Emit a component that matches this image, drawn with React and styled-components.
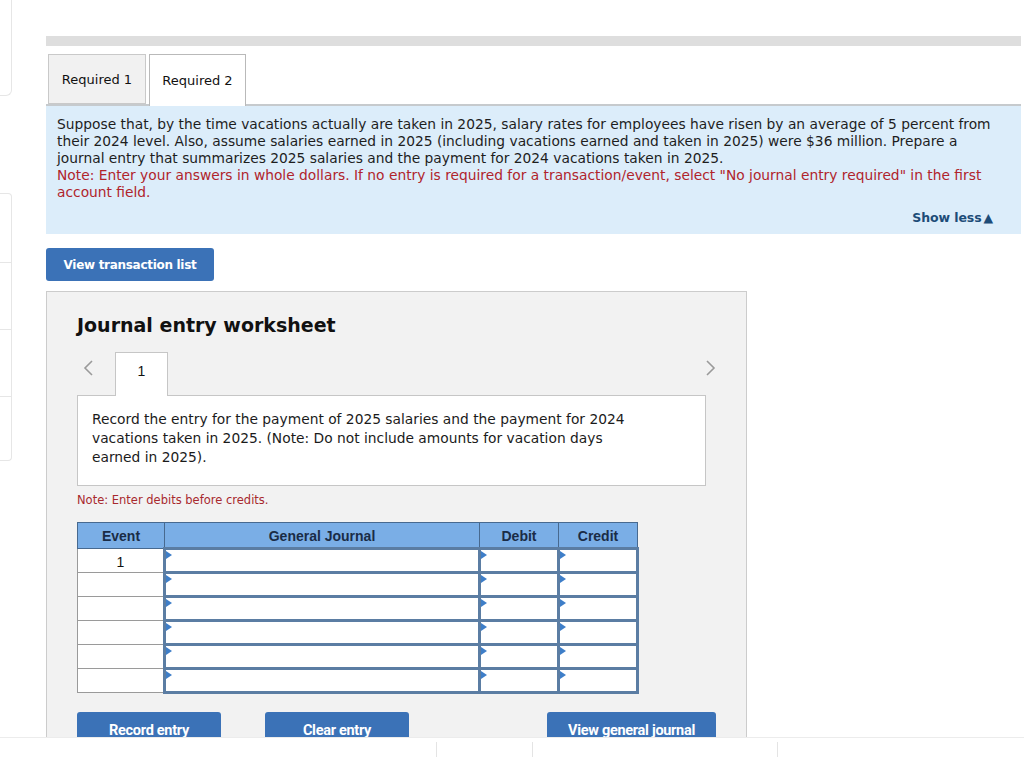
import React from "react";
import styled, { createGlobalStyle } from "styled-components";

const Global = createGlobalStyle`
  html, body { margin: 0; padding: 0; background: #fff; }
  body { font-family: "DejaVu Sans", Verdana, sans-serif; color: #222; }
  * { box-sizing: border-box; }
`;

const Page = styled.div`
  position: relative;
  width: 1024px;
  height: 757px;
  overflow: hidden;
  display: flex;
`;

const Side = styled.div`
  width: 12px;
  flex: none;
  display: flex;
  flex-direction: column;
`;

const SideTop = styled.div`
  height: 96px;
  border: 1px solid #e6e6e6;
  border-top: none;
  border-left: none;
  border-bottom-right-radius: 6px;
`;

const SideItem = styled.div`
  height: ${(p) => p.h}px;
  margin-top: ${(p) => p.mt || 0}px;
  border: 1px solid #e6e6e6;
  border-left: none;
  border-top: ${(p) => (p.first ? "1px solid #e6e6e6" : "none")};
  border-top-right-radius: ${(p) => (p.first ? "4px" : "0")};
  border-bottom-right-radius: ${(p) => (p.last ? "4px" : "0")};
`;

const Main = styled.div`
  margin-left: 34px;
  width: 975px;
  padding-top: 36px;
`;

const TopBar = styled.div`
  height: 10px;
  background: #dedede;
`;

const Tabs = styled.div`
  display: flex;
  gap: 3px;
  margin-top: 8px;
  padding-left: 2px;
  position: relative;
  z-index: 1;
`;

const Tab = styled.div`
  width: ${(p) => p.w}px;
  height: ${(p) => (p.active ? 52 : 50)}px;
  margin-bottom: ${(p) => (p.active ? -2 : 0)}px;
  display: flex;
  align-items: center;
  justify-content: center;
  font-size: 13px;
  color: #111;
  background: ${(p) => (p.active ? "#fff" : "#f1f1f1")};
  border: 1px solid ${(p) => (p.active ? "#b9b9b9" : "#c9c9c9")};
  border-bottom: ${(p) => (p.active ? "none" : "1px solid #c9c9c9")};
  padding-top: 1px;
  padding-bottom: ${(p) => (p.active ? 2 : 0)}px;
`;

const Prompt = styled.div`
  background: #dcedfa;
  border-top: 2px solid #c6cacd;
  padding: 10px 28px 8px 11px;
  font-size: 13.8px;
  line-height: 17px;
  color: #1e1e1e;
  height: 130px;
  display: flex;
  flex-direction: column;
`;

const Red = styled.span`
  color: #b0242c;
`;

const ShowLess = styled.div`
  margin-top: auto;
  align-self: flex-end;
  font-weight: bold;
  font-size: 12.5px;
  color: #1d4c78;
  letter-spacing: -0.1px;
`;

const Tri = styled.span`
  margin-left: 2px;
`;

const BlueButton = styled.button`
  display: flex;
  justify-content: center;
  width: ${(p) => p.w}px;
  height: ${(p) => p.h || 33}px;
  border: none;
  border-radius: 3px;
  background: #3b72b7;
  color: #fff;
  font-family: ${(p) => (p.condensed ? '"Roboto", "Liberation Sans", sans-serif' : '"DejaVu Sans", Verdana, sans-serif')};
  font-weight: bold;
  font-size: ${(p) => p.fs || 12}px;
  letter-spacing: -0.3px;
  padding: ${(p) => (p.condensed ? "10px 0 0" : "0")};
  align-items: ${(p) => (p.condensed ? "flex-start" : "center")};
  cursor: pointer;
`;

const TopButtonWrap = styled.div`
  margin-top: 14px;
`;

const Worksheet = styled.div`
  margin-top: 10px;
  width: 701px;
  background: #f2f2f2;
  border: 1px solid #cccccc;
  padding: 21px 0 40px 30px;
`;

const Title = styled.h2`
  margin: 0;
  font-size: 19px;
  font-weight: bold;
  color: #111;
  line-height: 24px;
`;

const NavRow = styled.div`
  display: flex;
  align-items: center;
  margin-top: 15px;
  height: 44px;
  width: 640px;
  position: relative;
  z-index: 1;
`;

const Arrow = styled.div`
  width: 38px;
  display: flex;
  justify-content: ${(p) => (p.right ? "flex-end" : "flex-start")};
  padding-left: ${(p) => (p.right ? 0 : 5)}px;
  margin-left: ${(p) => (p.right ? "auto" : 0)};
  color: #9a9a9a;
  align-self: center;
  margin-top: -12px;
`;

const NumTab = styled.div`
  width: 53px;
  height: 44px;
  background: #fff;
  border: 1px solid #c6c6c6;
  border-bottom: none;
  display: flex;
  align-items: center;
  justify-content: center;
  font-family: "Liberation Sans", Arial, sans-serif;
  font-size: 14px;
  color: #111;
  padding-bottom: 7px;
`;

const RecordBox = styled.div`
  width: 629px;
  height: 91px;
  margin-top: -1px;
  background: #fff;
  border: 1px solid #c6c6c6;
  padding: 14px 14px;
  font-size: 13.8px;
  line-height: 19px;
  color: #1b1b1b;
`;

const NoteSmall = styled.div`
  margin-top: 7px;
  font-size: 11.5px;
  color: #a8292e;
`;

const Table = styled.table`
  margin-top: 15px;
  border-collapse: collapse;
  font-family: "Liberation Sans", Arial, sans-serif;
  table-layout: fixed;
  width: 561px;
`;

const Th = styled.th`
  height: 26px;
  background: #7aaee6;
  border: 1px solid #47698f;
  color: #1a2c46;
  font-size: 14px;
  font-weight: bold;
  padding: 1px 0 0;
  width: ${(p) => p.w}px;
`;

const EventCell = styled.td`
  height: 24px;
  background: #fff;
  border: 1px solid #9a9a9a;
  text-align: center;
  vertical-align: top;
  padding-top: 5px;
  font-size: 14px;
  color: #111;
`;

const InputCell = styled.td`
  height: 24px;
  background: #fff;
  border: 3px solid #5b7da3;
  position: relative;
  padding: 0;
`;

const Marker = styled.span`
  position: absolute;
  left: 0;
  top: 1px;
  width: 0;
  height: 0;
  border-top: 4px solid transparent;
  border-bottom: 4px solid transparent;
  border-left: 6px solid #3e7ec8;
`;

const ButtonRow = styled.div`
  display: flex;
  margin-top: 18px;
  width: 640px;
`;

const Spacer = styled.div`
  width: ${(p) => p.w}px;
  flex: none;
`;

const Footer = styled.div`
  position: absolute;
  left: 0;
  right: 0;
  bottom: 0;
  height: 20px;
  background: #fff;
  border-top: 1px solid #ececec;
  display: flex;
  padding-top: 4px;
  z-index: 5;
`;

const FooterDivider = styled.div`
  width: ${(p) => p.w}px;
  flex: none;
  border-right: ${(p) => (p.line ? "1px solid #e4e4e4" : "none")};
`;

const Chevron = ({ dir }) => (
  <svg width="12" height="18" viewBox="0 0 12 18" fill="none">
    <path
      d={dir === "left" ? "M10 2 L3 9 L10 16" : "M2 2 L9 9 L2 16"}
      stroke="#9a9a9a"
      strokeWidth="1.6"
    />
  </svg>
);

const rows = [1, 2, 3, 4, 5, 6];

export default function App() {
  return (
    <Page>
      <Global />
      <Side>
        <SideTop />
        <SideItem first h={70} mt={97} />
        <SideItem h={67} />
        <SideItem h={67} />
        <SideItem last h={64} />
      </Side>
      <Main>
        <TopBar />
        <Tabs>
          <Tab w={98}>Required 1</Tab>
          <Tab w={97} active>
            Required 2
          </Tab>
        </Tabs>
        <Prompt>
          <div>
            Suppose that, by the time vacations actually are taken in 2025, salary rates for employees have risen by an average of 5 percent from
            <br />
            their 2024 level. Also, assume salaries earned in 2025 (including vacations earned and taken in 2025) were $36 million. Prepare a
            <br />
            journal entry that summarizes 2025 salaries and the payment for 2024 vacations taken in 2025.
            <br />
            <Red>
              Note: Enter your answers in whole dollars. If no entry is required for a transaction/event, select "No journal entry required" in the first
              <br />
              account field.
            </Red>
          </div>
          <ShowLess>
            Show less<Tri>▲</Tri>
          </ShowLess>
        </Prompt>
        <TopButtonWrap>
          <BlueButton w={168}>View transaction list</BlueButton>
        </TopButtonWrap>
        <Worksheet>
          <Title>Journal entry worksheet</Title>
          <NavRow>
            <Arrow>
              <Chevron dir="left" />
            </Arrow>
            <NumTab>1</NumTab>
            <Arrow right>
              <Chevron dir="right" />
            </Arrow>
          </NavRow>
          <RecordBox>
            Record the entry for the payment of 2025 salaries and the payment for 2024
            <br />
            vacations taken in 2025. (Note: Do not include amounts for vacation days
            <br />
            earned in 2025).
          </RecordBox>
          <NoteSmall>Note: Enter debits before credits.</NoteSmall>
          <Table>
            <thead>
              <tr>
                <Th w={87}>Event</Th>
                <Th w={315}>General Journal</Th>
                <Th w={79}>Debit</Th>
                <Th w={79}>Credit</Th>
              </tr>
            </thead>
            <tbody>
              {rows.map((r) => (
                <tr key={r}>
                  <EventCell>{r === 1 ? "1" : ""}</EventCell>
                  <InputCell>
                    <Marker />
                  </InputCell>
                  <InputCell>
                    <Marker />
                  </InputCell>
                  <InputCell>
                    <Marker />
                  </InputCell>
                </tr>
              ))}
            </tbody>
          </Table>
          <ButtonRow>
            <BlueButton condensed w={144} h={30} fs={14.5}>
              Record entry
            </BlueButton>
            <Spacer w={44} />
            <BlueButton condensed w={144} h={30} fs={14.5}>
              Clear entry
            </BlueButton>
            <Spacer w={138} />
            <BlueButton condensed w={169} h={30} fs={14.5}>
              View general journal
            </BlueButton>
          </ButtonRow>
        </Worksheet>
      </Main>
      <Footer>
        <FooterDivider w={437} line />
        <FooterDivider w={96} line />
        <FooterDivider w={245} line />
      </Footer>
    </Page>
  );
}
